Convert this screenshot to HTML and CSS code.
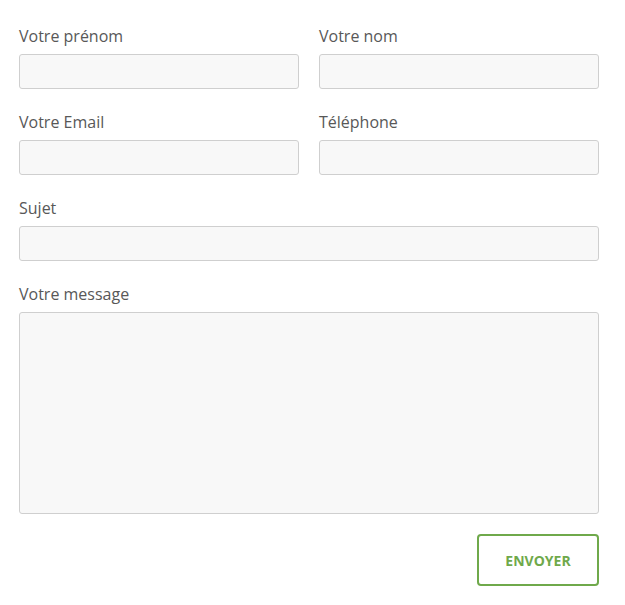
FILE: index.html
```html
<!DOCTYPE html>
<html lang="fr">
<head>
<meta charset="utf-8">
<link rel="stylesheet" href="styles.css">
</head>
<body>
<form class="form">
  <div class="grid">
    <div class="field">
      <label class="label">Votre prénom</label>
      <input class="input" type="text">
    </div>
    <div class="field">
      <label class="label">Votre nom</label>
      <input class="input" type="text">
    </div>
    <div class="field">
      <label class="label">Votre Email</label>
      <input class="input" type="text">
    </div>
    <div class="field">
      <label class="label">Téléphone</label>
      <input class="input" type="text">
    </div>
    <div class="field full">
      <label class="label">Sujet</label>
      <input class="input" type="text">
    </div>
    <div class="field full">
      <label class="label">Votre message</label>
      <textarea class="input textarea"></textarea>
    </div>
  </div>
  <div class="actions">
    <button class="btn" type="button">ENVOYER</button>
  </div>
</form>
</body>
</html>
```
FILE: styles.css
```css
html, body {
  margin: 0;
  padding: 0;
  background: #fff;
}
body {
  font-family: "Open Sans", "Noto Sans", sans-serif;
  color: #555;
}
.form {
  width: 580px;
  padding: 24px 0 0 19px;
}
.grid {
  display: grid;
  grid-template-columns: 280px 280px;
  column-gap: 20px;
  row-gap: 21px;
}
.field {
  display: flex;
  flex-direction: column;
}
.full {
  grid-column: 1 / span 2;
}
.label {
  font-size: 16px;
  line-height: 24px;
  margin-bottom: 6px;
  color: #585858;
}
.input {
  box-sizing: border-box;
  height: 35px;
  width: 100%;
  margin: 0;
  border: 1px solid #cfcfcf;
  border-radius: 3px;
  background: #f8f8f8;
  font-family: inherit;
}
.textarea {
  height: 202px;
  resize: none;
}
.actions {
  display: flex;
  justify-content: flex-end;
  margin-top: 20px;
}
.btn {
  box-sizing: border-box;
  width: 122px;
  height: 52px;
  border: 2px solid #6fa94b;
  border-radius: 4px;
  background: #fff;
  color: #6fa94b;
  font-family: "Open Sans", "Noto Sans", sans-serif;
  font-weight: 700;
  font-size: 14px;
  padding: 0;
}
```
